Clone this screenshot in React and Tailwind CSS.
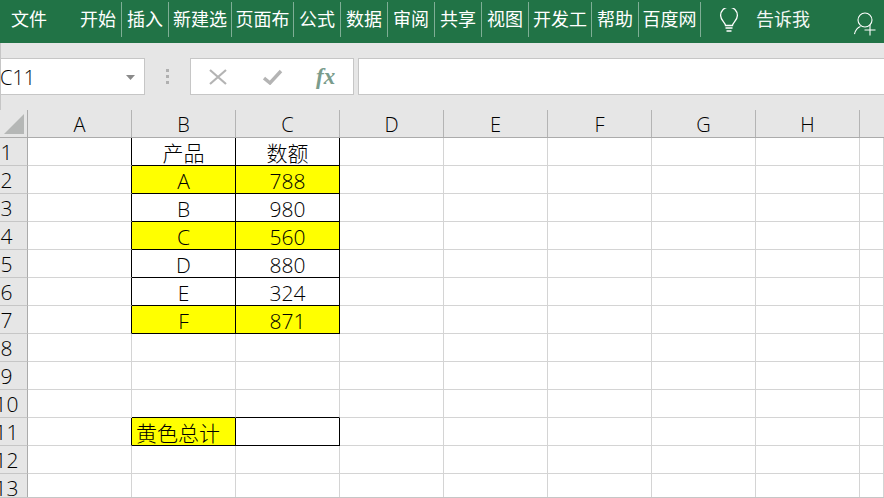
const tabs = [
  ["开始", "w-[47px]"],
  ["插入", "w-[47px]"],
  ["新建选", "w-[63px]"],
  ["页面布", "w-[62px]"],
  ["公式", "w-[47px]"],
  ["数据", "w-[47px]"],
  ["审阅", "w-[47px]"],
  ["共享", "w-[47px]"],
  ["视图", "w-[47px]"],
  ["开发工", "w-[63px]"],
  ["帮助", "w-[47px]"],
  ["百度网", "w-[62px]"],
];

const columns = ["A", "B", "C", "D", "E", "F", "G", "H", ""];
const rowNumbers = [1, 2, 3, 4, 5, 6, 7, 8, 9, 10, 11, 12, 13];

const table = {
  1: { B: "产品", C: "数额" },
  2: { B: "A", C: "788", fill: true },
  3: { B: "B", C: "980" },
  4: { B: "C", C: "560", fill: true },
  5: { B: "D", C: "880" },
  6: { B: "E", C: "324" },
  7: { B: "F", C: "871", fill: true },
};

const isBoxed = (row, col) =>
  (col === "B" || col === "C") && ((row >= 1 && row <= 7) || row === 11);

function Cell({ row, col }) {
  const data = table[row] || {};
  const boxed = isBoxed(row, col);
  const rightBlack = boxed || (col === "A" && isBoxed(row, "B"));
  const bottomBlack = boxed || isBoxed(row + 1, col);
  const isTotal = row === 11 && col === "B";
  const yellow = (data.fill && boxed) || isTotal;

  return (
    <div
      className={`${col === "" ? "flex-1" : "w-[104px]"} flex items-end h-full border-r border-b text-[21px] font-light leading-[24px] text-black ${
        rightBlack ? "border-r-black" : "border-r-[#d4d4d4]"
      } ${bottomBlack ? "border-b-black" : "border-b-[#d4d4d4]"} ${
        yellow ? "bg-[#ffff00]" : "bg-white"
      } ${isTotal ? "justify-start pl-[4px]" : "justify-center"}`}
    >
      {isTotal ? "黄色总计" : data[col]}
    </div>
  );
}

export default function App() {
  return (
    <div className="w-[884px] h-[498px] overflow-hidden flex flex-col bg-white font-['Open_Sans','Noto_Sans_CJK_SC',sans-serif]">
      {/* ribbon tabs */}
      <div className="h-[43px] shrink-0 bg-[#217346] flex items-start pt-[2px] text-white text-[18px] leading-[35px]">
        <div className="w-[75px] pl-[11px]">文件</div>
        {tabs.map(([label, width]) => (
          <div key={label} className={`${width} h-[35px] border-r border-r-[#7fae95] text-center whitespace-nowrap`}>
            {label}
          </div>
        ))}
        <div className="ml-[18px] mt-[6px] w-[20px] h-[25px]">
          <svg width="20" height="25" viewBox="0 0 20 25" fill="none" stroke="white" strokeWidth="1.3">
            <path d="M6.5 17.5c0-3-4.9-5-4.9-10a8.4 8.4 0 0 1 16.8 0c0 5-4.900 7-4.900 10z" />
            <path d="M6.500 20h7M7.500 23h5" strokeWidth="1.600" />
          </svg>
        </div>
        <div className="ml-[17px] w-[54px] whitespace-nowrap text-[#f2f7f4]">告诉我</div>
        <div className="ml-[44px] mt-[10px] w-[30px] h-[24px]">
          <svg width="30" height="24" viewBox="0 0 30 24" fill="none" stroke="white" strokeWidth="1.1">
            <circle cx="11" cy="8" r="7" />
            <path d="M0.500 22c1-4 3-6.500 6-7.500M16 12.500v11M10.500 18h11" />
          </svg>
        </div>
      </div>

      {/* formula bar */}
      <div className="h-[67px] shrink-0 bg-[#e6e6e6] flex items-start pt-[15px] border-l border-l-[#c6c6c6]">
        <div className="w-[144px] h-[37px] bg-white border border-[#c6c6c6] border-l-0 flex items-center justify-between pt-[2px] text-[20px] font-light text-black pr-[9px]">
          <span className="-ml-[1px]">C11</span>
          <svg width="9" height="5" viewBox="0 0 9 5">
            <path d="M0 0h9L4.500 5z" fill="#8a8a8a" />
          </svg>
        </div>
        <div className="w-[45px] h-[37px] flex flex-col items-center justify-center gap-[3px]">
          <span className="w-[3px] h-[3px] bg-[#b0b0b0]"></span>
          <span className="w-[3px] h-[3px] bg-[#b0b0b0]"></span>
          <span className="w-[3px] h-[3px] bg-[#b0b0b0]"></span>
        </div>
        <div className="w-[164px] h-[37px] bg-white border border-[#c6c6c6] flex items-center pl-[18px]">
          <svg width="18" height="16" viewBox="0 0 18 16" fill="none" stroke="#b4b4b4" strokeWidth="2.200">
            <path d="M1 1l16 14M17 1L1 15" />
          </svg>
          <svg className="ml-[36px]" width="20" height="16" viewBox="0 0 20 16" fill="none" stroke="#b4b4b4" strokeWidth="3.400">
            <path d="M1 9l6 5L18 2" />
          </svg>
          <span className="ml-[33px] font-['Liberation_Serif',serif] italic font-bold text-[23px] leading-[25px] text-[#7a9c8c]">fx</span>
        </div>
        <div className="flex-1 ml-[4px] h-[37px] bg-white border-y border-l border-[#c6c6c6]"></div>
      </div>

      {/* column headers */}
      <div className="h-[28px] shrink-0 flex bg-[#e6e6e6] border-b border-b-[#ababab]">
        <div className="w-[28px] border-r border-r-[#ababab] pl-[4px] pt-[4px]">
          <svg width="20" height="20" viewBox="0 0 20 20">
            <path d="M20 0v20H0z" fill="#b5b7b6" />
          </svg>
        </div>
        {columns.map((col) => (
          <div
            key={col}
            className={`${col === "" ? "flex-1" : "w-[104px] border-r border-r-[#b4b4b4]"} flex items-center justify-center pt-[3px] text-[20px] font-light text-black`}
          >
            {col}
          </div>
        ))}
      </div>

      {/* sheet */}
      <div className="flex-1 overflow-hidden border-b border-b-[#c6c6c6]">
        {rowNumbers.map((row) => (
          <div key={row} className="h-[28px] flex">
            <div className="w-[28px] h-full flex items-end justify-center pr-[14px] bg-[#e6e6e6] border-r border-r-[#ababab] border-b border-b-[#c6c6c6] text-[21px] font-light leading-[25px] text-black">
              {row}
            </div>
            {columns.map((col) => (
              <Cell key={col} row={row} col={col} />
            ))}
          </div>
        ))}
      </div>
    </div>
  );
}
